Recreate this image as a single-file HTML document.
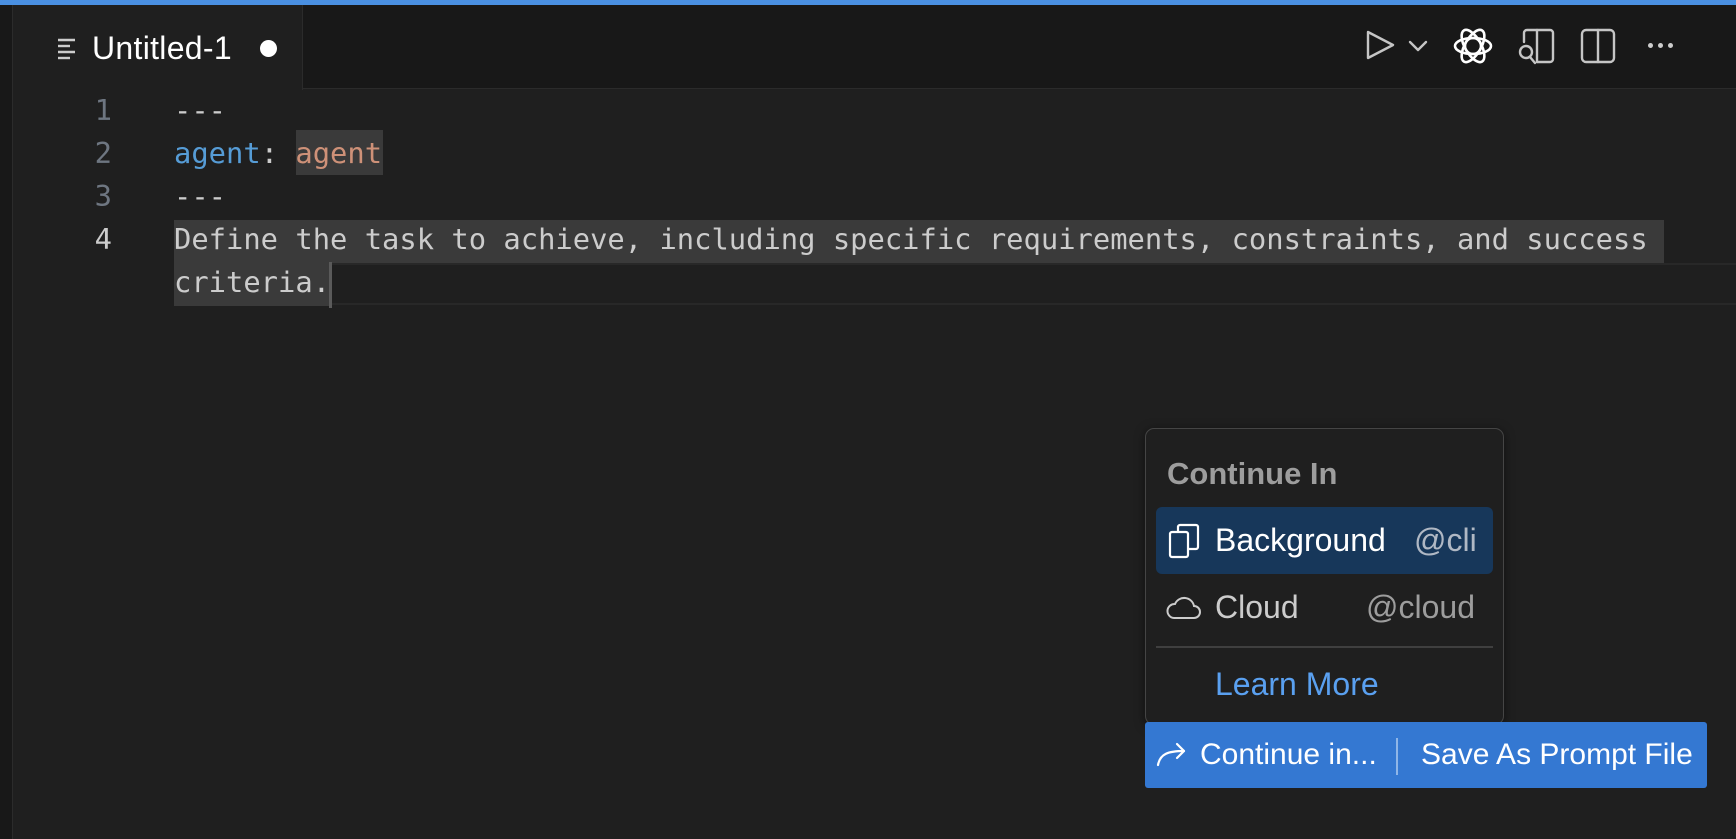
<!DOCTYPE html>
<html><head><meta charset="utf-8"><style>
*{margin:0;padding:0;box-sizing:border-box}
body{width:1736px;height:839px;background:#1f1f1f;position:relative;overflow:hidden;font-family:"Liberation Sans",sans-serif}
.abs{position:absolute}
.code{font-family:"DejaVu Sans Mono","Liberation Mono",monospace;font-size:28.8px;color:#cccccc;white-space:pre;line-height:43px}
.ln{font-family:"DejaVu Sans Mono","Liberation Mono",monospace;font-size:28.8px;color:#6e7681;line-height:43px;width:40px;text-align:right;left:72px}
</style></head><body>
<div class="abs" style="left:0;top:0;width:1736px;height:5px;background:#4a90e2"></div>
<div class="abs" style="left:0;top:5px;width:13px;height:834px;background:#181818;border-right:1px solid #2b2b2b"></div>
<div class="abs" style="left:14px;top:5px;width:1722px;height:84px;background:#181818;border-bottom:1px solid #2b2b2b"></div>
<div class="abs" style="left:14px;top:5px;width:289px;height:85px;background:#1f1f1f;border-right:1px solid #2b2b2b"></div>
<svg class="abs" style="left:57px;top:37px" width="20" height="24" viewBox="0 0 20 24"><g stroke="#cccccc" stroke-width="2.4"><line x1="1" y1="3" x2="18" y2="3"/><line x1="1" y1="9" x2="13" y2="9"/><line x1="1" y1="15" x2="18" y2="15"/><line x1="1" y1="21" x2="13" y2="21"/></g></svg>
<div class="abs" style="left:92px;top:30px;font-size:32px;color:#ffffff;letter-spacing:0.3px">Untitled-1</div>
<div class="abs" style="left:260px;top:40px;width:17px;height:17px;border-radius:50%;background:#fff"></div>
<svg class="abs" style="left:1360px;top:25px" width="330" height="45" viewBox="1360 25 330 45" fill="none" stroke="#c5c5c5" stroke-width="2.4" stroke-linejoin="round" stroke-linecap="round">
<path d="M1368 32 L1393 45 L1368 58 Z"/>
<path d="M1410 42 L1418 50 L1426 42"/>
<g stroke="#ffffff" stroke-width="2.6"><circle cx="1473" cy="46" r="8"/><ellipse cx="1473" cy="46" rx="18" ry="8"/><ellipse cx="1473" cy="46" rx="18" ry="8" transform="rotate(60 1473 46)"/><ellipse cx="1473" cy="46" rx="18" ry="8" transform="rotate(120 1473 46)"/></g>
<path d="M1524 42 V33 a3 3 0 0 1 3-3 H1550 a3 3 0 0 1 3 3 V59 a3 3 0 0 1 -3 3 H1537"/><line x1="1537" y1="30" x2="1537" y2="62"/><circle cx="1526" cy="52" r="6"/><line x1="1530" y1="57" x2="1535" y2="63"/>
<rect x="1582" y="30" width="32" height="32" rx="4"/><line x1="1598" y1="30" x2="1598" y2="62"/>
</svg>
<div class="abs" style="left:1648px;top:43px;width:5px;height:5px;border-radius:50%;background:#ccc;box-shadow:10px 0 0 #ccc,20px 0 0 #ccc"></div>
<div class="abs ln" style="top:89px">1</div>
<div class="abs ln" style="top:132px">2</div>
<div class="abs ln" style="top:175px">3</div>
<div class="abs ln" style="top:218px;color:#cccccc">4</div>
<div class="abs" style="left:300px;top:263px;width:1436px;height:42px;border-top:2px solid #282828;border-bottom:2px solid #282828"></div>
<div class="abs" style="left:1664px;top:263px;width:72px;height:2px;background:#282828"></div>
<div class="abs" style="left:296px;top:130px;width:87px;height:45px;background:#3a3a3a"></div>
<div class="abs" style="left:174px;top:220px;width:1490px;height:43px;background:#3a3a3a"></div>
<div class="abs" style="left:174px;top:263px;width:156px;height:43px;background:#3a3a3a"></div>
<div class="abs" style="left:329px;top:262px;width:3px;height:46px;background:#5a5a5a"></div>
<div class="abs code" style="left:174px;top:89px">---</div>
<div class="abs code" style="left:174px;top:132px"><span style="color:#569cd6">agent</span>: <span style="color:#ce9178">agent</span></div>
<div class="abs code" style="left:174px;top:175px">---</div>
<div class="abs code" style="left:174px;top:218px">Define the task to achieve, including specific requirements, constraints, and success</div>
<div class="abs code" style="left:174px;top:261px">criteria.</div>
<div class="abs" style="left:1145px;top:428px;width:359px;height:297px;background:#1f1f1f;border:1.5px solid #454545;border-radius:9px;box-shadow:0 2px 10px rgba(0,0,0,.5)"></div>
<div class="abs" style="left:1167px;top:456px;font-size:31px;font-weight:bold;color:#9d9d9d">Continue In</div>
<div class="abs" style="left:1156px;top:507px;width:337px;height:67px;background:#17375a;border-radius:6px"></div>
<svg class="abs" style="left:1167px;top:523px" width="36" height="36" viewBox="0 0 36 36" fill="none" stroke="#fff" stroke-width="2.2"><rect x="11" y="2" width="20" height="24" rx="2"/><rect x="3" y="9" width="18" height="25" rx="2" fill="#17375a"/></svg>
<div class="abs" style="left:1215px;top:522px;font-size:32px;color:#fff">Background</div>
<div class="abs" style="left:1414px;top:522px;font-size:32px;color:#b0b8c4">@cli</div>
<svg class="abs" style="left:1166px;top:592px" width="36" height="30" viewBox="0 0 36 30" fill="none" stroke="#cccccc" stroke-width="2"><path d="M8 26 H28 a6 6 0 0 0 0-12 a10 10 0 0 0 -19 -2 a7 7 0 0 0 -1 14 Z"/></svg>
<div class="abs" style="left:1215px;top:589px;font-size:32px;color:#cccccc">Cloud</div>
<div class="abs" style="left:1366px;top:589px;font-size:32px;color:#9d9d9d">@cloud</div>
<div class="abs" style="left:1156px;top:646px;width:337px;height:2px;background:#3f3f3f"></div>
<div class="abs" style="left:1215px;top:666px;font-size:32px;color:#5aa0f0">Learn More</div>
<div class="abs" style="left:1145px;top:722px;width:562px;height:66px;background:#3478d2;border-radius:3px"></div>
<svg class="abs" style="left:1156px;top:740px" width="32" height="28" viewBox="0 0 32 28" fill="none" stroke="#fff" stroke-width="2.2" stroke-linecap="round" stroke-linejoin="round"><path d="M2 25 C4 14 12 11 28 11"/><path d="M21 4 L28 11 L21 18"/></svg>
<div class="abs" style="left:1200px;top:738px;font-size:30px;color:#fff">Continue in...</div>
<div class="abs" style="left:1396px;top:738px;width:2px;height:37px;background:#8fb6e8"></div>
<div class="abs" style="left:1421px;top:738px;font-size:30px;color:#fff">Save As Prompt File</div>
</body></html>
